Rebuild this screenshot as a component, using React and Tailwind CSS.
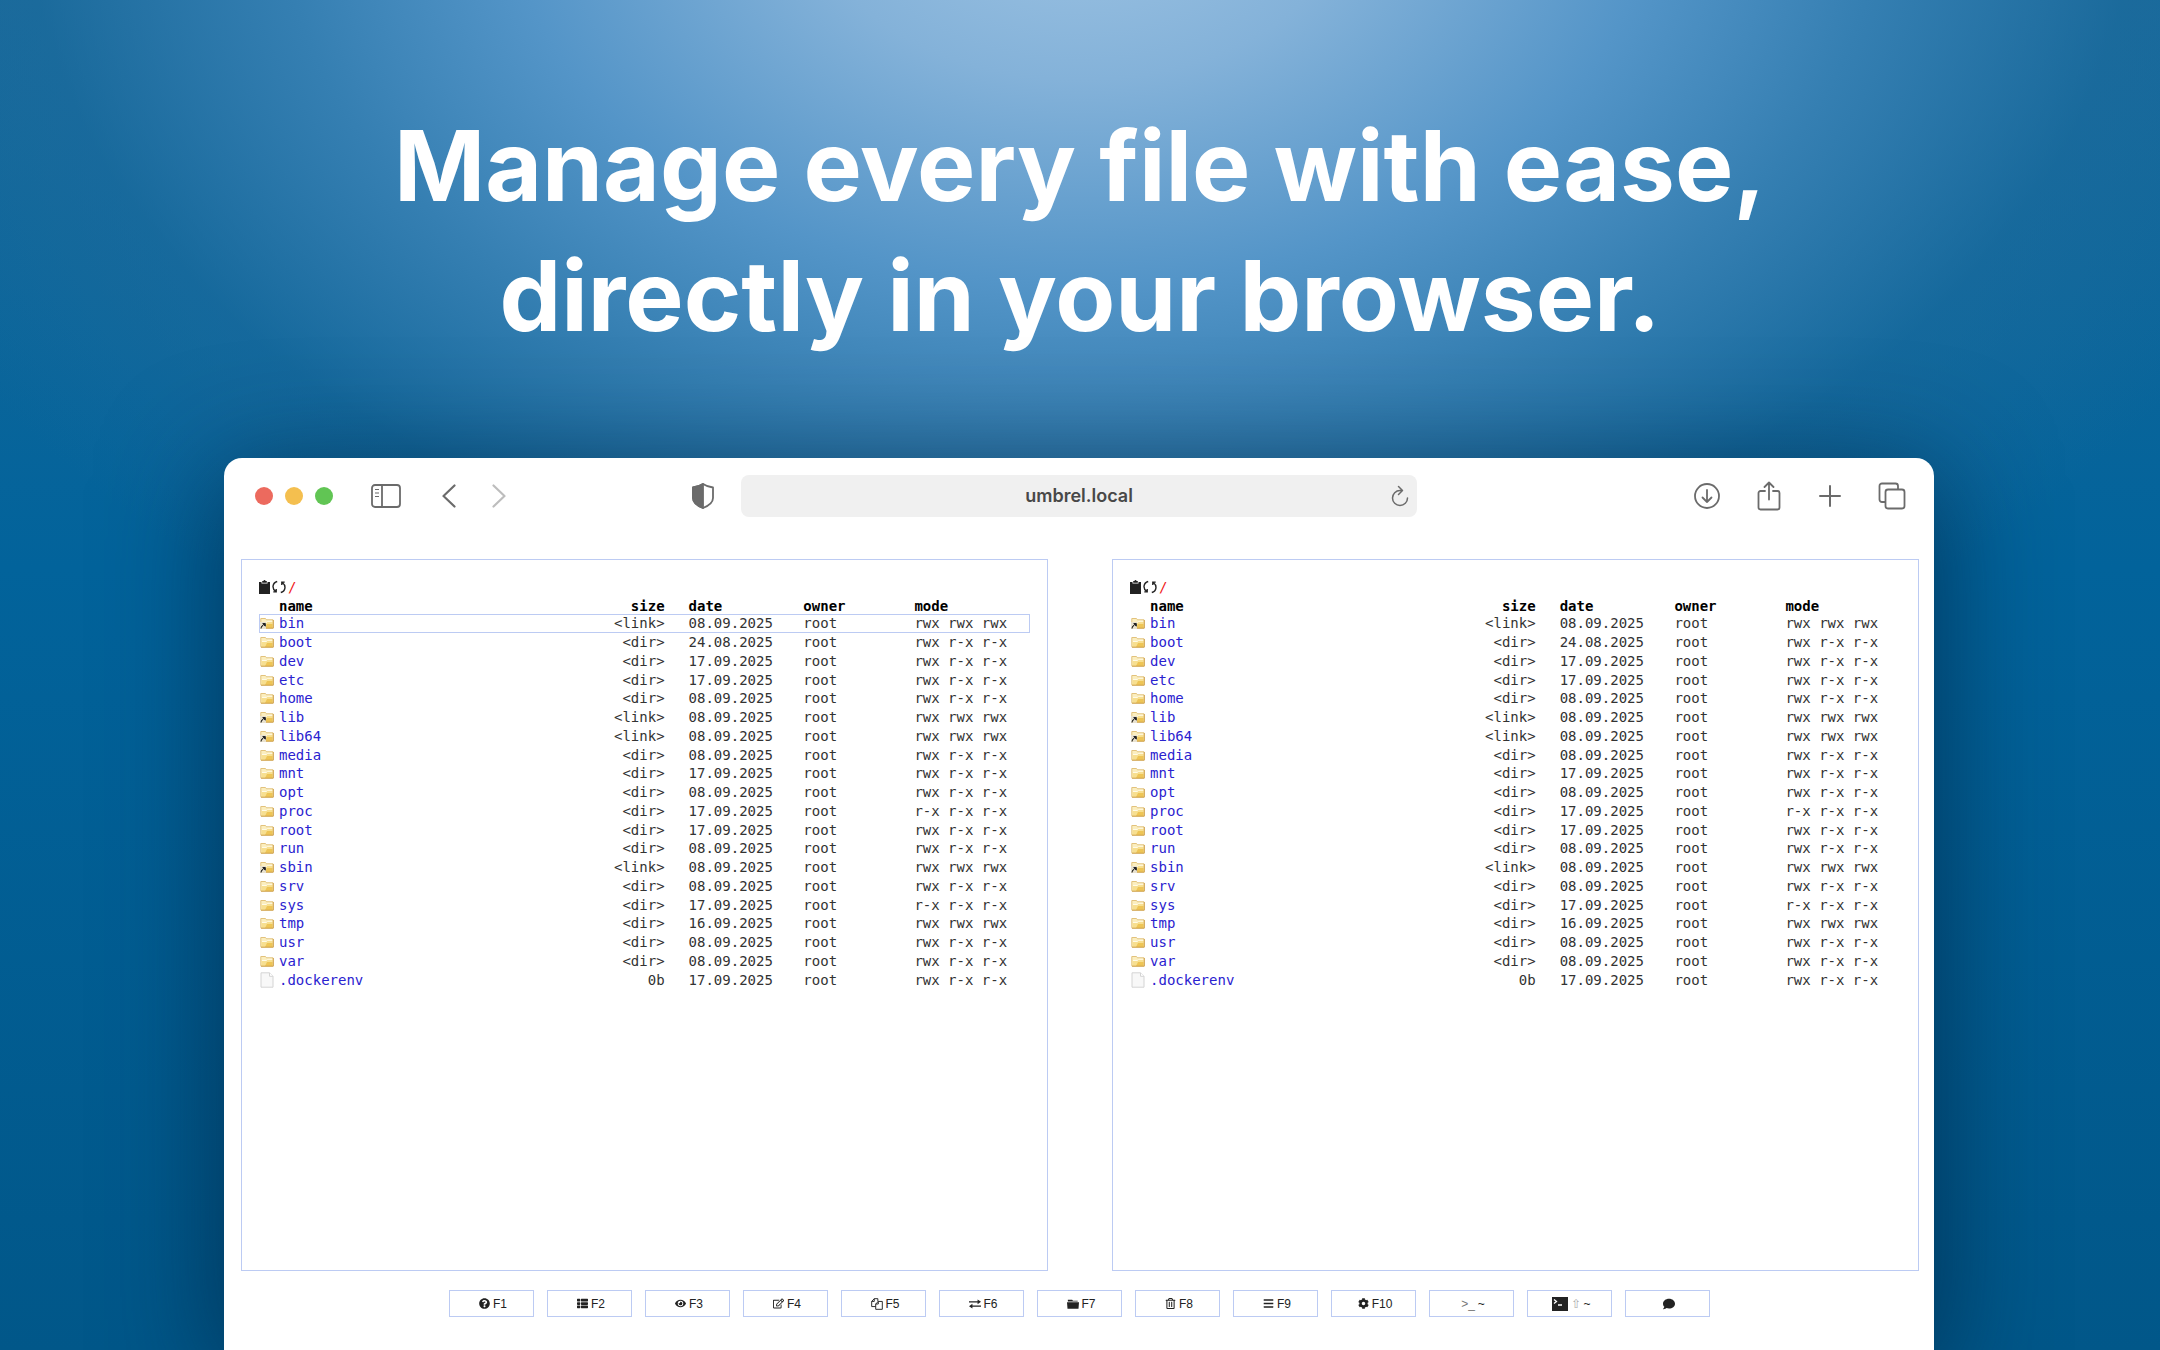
import { FaQuestionCircle, FaThList, FaEye, FaRegEdit, FaRegTrashAlt, FaBars, FaCog, FaComment } from "react-icons/fa";

const files = [
  ["bin", "link", "08.09.2025"],
  ["boot", "dir", "24.08.2025"],
  ["dev", "dir", "17.09.2025"],
  ["etc", "dir", "17.09.2025"],
  ["home", "dir", "08.09.2025"],
  ["lib", "link", "08.09.2025"],
  ["lib64", "link", "08.09.2025"],
  ["media", "dir", "08.09.2025"],
  ["mnt", "dir", "17.09.2025"],
  ["opt", "dir", "08.09.2025"],
  ["proc", "dir", "17.09.2025", "r-x r-x r-x"],
  ["root", "dir", "17.09.2025"],
  ["run", "dir", "08.09.2025"],
  ["sbin", "link", "08.09.2025"],
  ["srv", "dir", "08.09.2025"],
  ["sys", "dir", "17.09.2025", "r-x r-x r-x"],
  ["tmp", "dir", "16.09.2025", "rwx rwx rwx"],
  ["usr", "dir", "08.09.2025"],
  ["var", "dir", "08.09.2025"],
  [".dockerenv", "file", "17.09.2025"],
];

function FileIcon({ type }) {
  if (type === "file") {
    return (
      <svg viewBox="0 0 14 16" className="h-4 w-3.5" aria-hidden="true">
        <path d="M1 .8h8.5L13 4.3v10.9H1z" fill="#f8f8f8" stroke="#d4d4d4" />
        <path d="M9.5 .8v3.5H13" fill="#fff" stroke="#d4d4d4" />
      </svg>
    );
  }
  return (
    <svg viewBox="0 0 14 12" className="h-3 w-3.5" aria-hidden="true">
      <path d="M.8 10.500V1.500h4.700l1 1.300H13v8.200H.8z" fill="#fbeebf" stroke="#e2c27c" />
      <path d="M1.500 5.500h5l1-1.200h5.300V11H1.500z" fill="#f7df90" />
      <path d="M7 7h5.500v4H5z" fill="#eec556" />
      <path d="M2 5.500h4.500l1-1.200h5" fill="none" stroke="#fffbe8" />
      <path d="M1 11.200h12.300V3" fill="none" stroke="#cfa24e" />
      {type === "link" && (
        <>
          <path d="M0 5h6v7H0z" fill="#e9e2cf" />
          <path d="M1 11.500c.2-2 1.200-3.200 2.800-4M2.800 6.500h2.500v2.700z" fill="#222" stroke="#222" strokeWidth="1" />
        </>
      )}
    </svg>
  );
}

function Panel({ selected, label }) {
  return (
    <section aria-label={label} className="min-h-[712px] min-w-0 flex-1 border border-[#bccbf3] px-[17px] pt-[17px]">
      <div className="flex h-[19px] items-center">
        <button aria-label="Copy path">
          <svg viewBox="0 0 11 14" className="h-3.5 w-[11px]" fill="#222">
            <path d="M0 2h2.500v1.500h6V2H11v12H0z" />
            <path d="M3.200 1h1.300a1 1 0 0 1 2 0h1.300v1.800H3.200z" />
          </svg>
        </button>
        <button aria-label="Refresh" className="ml-0.5">
          <svg viewBox="0 0 14 14" className="size-3.5" fill="none" stroke="#222" strokeWidth="1.400">
            <path d="M5.200 1.500C.2 3-.2 8.500 3.500 11.300M1.300 11.900h2.900V9" />
            <path d="M8.800 12.500c5-1.500 5.400-7 1.700-9.800M12.700 2.100H9.800V5" />
          </svg>
        </button>
        <a href="#root" className="ml-0.5 text-[#f02020]">/</a>
      </div>
      <table className="mt-0.5 h-[391px] w-full table-fixed border-collapse text-left leading-4">
        <colgroup>
          <col className="w-5" />
          <col />
          <col className="w-[12%]" />
          <col className="w-[18%]" />
          <col className="w-[14.4%]" />
          <col className="w-[15%]" />
        </colgroup>
        <thead>
          <tr className="text-black">
            <td></td>
            <th scope="col">name</th>
            <th scope="col" className="text-right">size</th>
            <th scope="col" className="pl-6">date</th>
            <th scope="col">owner</th>
            <th scope="col">mode</th>
          </tr>
        </thead>
        <tbody>
          {files.map(([name, type, date, mode], i) => (
            <tr key={name} className={selected && i === 0 ? "outline outline-1 -outline-offset-1 outline-[#bccbf3]" : ""}>
              <td><div className="flex h-4 items-center pl-px"><FileIcon type={type} /></div></td>
              <td><a href={"#" + name} className="text-[#2a22cf]">{name}</a></td>
              <td className="text-right">{type === "file" ? "0b" : "<" + type + ">"}</td>
              <td className="pl-6">{date}</td>
              <td>root</td>
              <td className="whitespace-nowrap">{mode || (type === "link" ? "rwx rwx rwx" : "rwx r-x r-x")}</td>
            </tr>
          ))}
        </tbody>
      </table>
    </section>
  );
}

function CopyIcon() {
  return (
    <svg viewBox="0 0 14 14" className="size-3" fill="none" stroke="currentColor" strokeWidth="1.100">
      <path d="M5.500 10H.8V4L3.800.8H8V4M.8 4h3V.8" />
      <path d="M5.500 7l3-3h4.700v9.200H5.500zM5.500 7h3V4" />
    </svg>
  );
}

function SwapIcon() {
  return (
    <svg viewBox="0 0 14 12" className="h-3 w-3" fill="currentColor">
      <path d="M0 2.700h10V.7L14 3.500l-4 2.800v-2H0zM14 7.700H4v-2L0 8.500l4 2.800v-2h10z" />
    </svg>
  );
}

function FolderIcon() {
  return (
    <svg viewBox="0 0 14 12" className="h-3 w-3" fill="currentColor">
      <path d="M1 3V1h5l1 1.300h5.500V3zM0 4h14l-.6 7.500H.6z" />
    </svg>
  );
}

function PromptIcon() {
  return (
    <svg viewBox="0 0 16 14" className="h-3.5 w-4">
      <path d="M0 0h16v14H0z" fill="#222" />
      <path d="M2 2.500l2.500 2L2 6.500M6 8h4" fill="none" stroke="#fff" strokeWidth="1.300" />
    </svg>
  );
}

const keys = [
  ["F1", FaQuestionCircle, "Help"],
  ["F2", FaThList, "Menu"],
  ["F3", FaEye, "View"],
  ["F4", FaRegEdit, "Edit"],
  ["F5", CopyIcon, "Copy"],
  ["F6", SwapIcon, "Move"],
  ["F7", FolderIcon, "Make folder"],
  ["F8", FaRegTrashAlt, "Delete"],
  ["F9", FaBars, "Options"],
  ["F10", FaCog, "Settings"],
];

const keyClass = "flex h-[27px] w-[85px] items-center justify-center gap-[3px] border border-[#bccbf3] pl-1 text-xs text-[#222]";

function Toolbar() {
  return (
    <header className="grid h-[75px] grid-cols-[1fr_39.5%_1fr] items-center text-[#6b6b6b]">
      <div className="flex items-center pl-[31px]">
        <div className="flex gap-3">
          <button aria-label="Close" className="size-[18px] rounded-full bg-[#ec6a5e]" />
          <button aria-label="Minimize" className="size-[18px] rounded-full bg-[#f4bf4f]" />
          <button aria-label="Zoom" className="size-[18px] rounded-full bg-[#61c554]" />
        </div>
        <button aria-label="Sidebar" className="ml-[38px]">
          <svg viewBox="0 0 30 24" className="h-6 w-[30px]" fill="none" stroke="currentColor" strokeWidth="1.800">
            <rect x="1" y="1" width="28" height="22" rx="3" />
            <path d="M11 1v22" />
            <path d="M4 5.500h4M4 9h4M4 12.500h4" strokeWidth="1.200" />
          </svg>
        </button>
        <button aria-label="Back" className="ml-[41px]">
          <svg viewBox="0 0 14 24" className="h-6 w-3.5" fill="none" stroke="currentColor" strokeWidth="2.200" strokeLinecap="round" strokeLinejoin="round">
            <path d="M12.500 1.500L1.500 12l11 10.500" />
          </svg>
        </button>
        <button aria-label="Forward" className="ml-9 text-[#bdbdbd]">
          <svg viewBox="0 0 14 24" className="h-6 w-3.5" fill="none" stroke="currentColor" strokeWidth="2.200" strokeLinecap="round" strokeLinejoin="round">
            <path d="M1.500 1.500l11 10.500-11 10.500" />
          </svg>
        </button>
        <button aria-label="Privacy report" className="mr-[27px] ml-auto">
          <svg viewBox="0 0 22 26" className="h-[26px] w-[22px]" fill="none" stroke="currentColor" strokeWidth="1.800" strokeLinejoin="round">
            <path d="M11 1c3 2 6 3 10 3.500V15c0 5-5 8-10 10C6 23 1 20 1 15V4.500C5 4 8 3 11 1z" />
            <path d="M11 1v24C6 23 1 20 1 15V4.500C5 4 8 3 11 1z" fill="currentColor" />
          </svg>
        </button>
      </div>
      <div className="flex h-[42px] items-center rounded-lg bg-[#f0f0f0] px-[7px]">
        <span className="w-5" />
        <input aria-label="Address" defaultValue="umbrel.local" className="min-w-0 flex-1 bg-transparent text-center font-[Inter,sans-serif] text-lg font-semibold text-[#484848] outline-none" />
        <button aria-label="Reload">
          <svg viewBox="0 0 20 22" className="h-[22px] w-5" fill="none" stroke="currentColor" strokeWidth="1.500" strokeLinecap="round" strokeLinejoin="round">
            <path d="M10 5.500a7.500 7.500 0 1 0 7.500 7.500M8.500 1.500l4 4-4 4M12 5.500h-2" />
          </svg>
        </button>
      </div>
      <div className="flex items-center justify-end pr-7">
        <button aria-label="Downloads">
          <svg viewBox="0 0 26 26" className="size-[26px]" fill="none" stroke="currentColor" strokeWidth="1.800" strokeLinecap="round" strokeLinejoin="round">
            <circle cx="13" cy="13" r="12" />
            <path d="M13 7v12M8.500 14.500L13 19l4.500-4.500" />
          </svg>
        </button>
        <button aria-label="Share" className="ml-[37px]">
          <svg viewBox="0 0 24 30" className="h-[30px] w-6" fill="none" stroke="currentColor" strokeWidth="1.800" strokeLinecap="round" strokeLinejoin="round">
            <path d="M8 10H3.500A2 2 0 0 0 1.500 12v14.500a2 2 0 0 0 2 2h17a2 2 0 0 0 2-2V12a2 2 0 0 0-2-2H16M12 18.500V1.500M7.500 6L12 1.500 16.500 6" />
          </svg>
        </button>
        <button aria-label="New tab" className="ml-[38px]">
          <svg viewBox="0 0 22 22" className="size-[22px]" fill="none" stroke="currentColor" strokeWidth="2" strokeLinecap="round">
            <path d="M11 1v20M1 11h20" />
          </svg>
        </button>
        <button aria-label="Tab overview" className="ml-[37px]">
          <svg viewBox="0 0 28 28" className="size-7" fill="none" stroke="currentColor" strokeWidth="1.800" strokeLinejoin="round">
            <path d="M7.500 20H4a2.500 2.500 0 0 1-2.500-2.500V4A2.500 2.500 0 0 1 4 1.500h13.500A2.500 2.500 0 0 1 20 4v3.500" />
            <rect x="7.500" y="7.500" width="19" height="19" rx="2.500" />
          </svg>
        </button>
      </div>
    </header>
  );
}

export default function App() {
  return (
    <main className="flex min-h-screen flex-col overflow-hidden bg-[#01588c] bg-[radial-gradient(ellipse_53%_58%_at_50%_-8%,#a0c5e4_0%,#84b2d9_24%,#5495c8_50%,#357fb2_70%,#1f6c9e80_92%,#1c6a9c00_115%),linear-gradient(#17699a,#02639b_42%,#015789)] font-[Inter,sans-serif]">
      <h1 className="mt-[101px] text-center text-[98px] leading-[130px] font-bold text-white">
        Manage every file with ease,
        <br />
        directly in your browser.
      </h1>
      <div className="mt-[97px] mr-[10.46%] ml-[10.37%] flex flex-1 flex-col rounded-t-[18px] bg-white shadow-[0_20px_110px_10px_#00233fa0]">
        <Toolbar />
        <div className="flex gap-16 pt-[26px] pr-[15px] pl-[17px] font-['DejaVu_Sans_Mono',monospace] text-sm text-[#333]">
          <Panel selected label="Left panel" />
          <Panel label="Right panel" />
        </div>
        <nav aria-label="Function keys" className="mt-[19px] mb-8 flex justify-center gap-[13px] font-['Liberation_Sans',sans-serif]">
          {keys.map(([key, Icon, title]) => (
            <button key={key} title={title} className={keyClass}>
              <Icon className="size-[11px]" />
              {key}
            </button>
          ))}
          <button title="Console" className={keyClass}><span className="text-[#777]">&gt;_</span> ~</button>
          <button title="Terminal" className={keyClass}><PromptIcon /> <span className="text-[#aaa]">⇧</span> ~</button>
          <button title="Contact" className={keyClass}><FaComment className="size-3" /></button>
        </nav>
      </div>
    </main>
  );
}
